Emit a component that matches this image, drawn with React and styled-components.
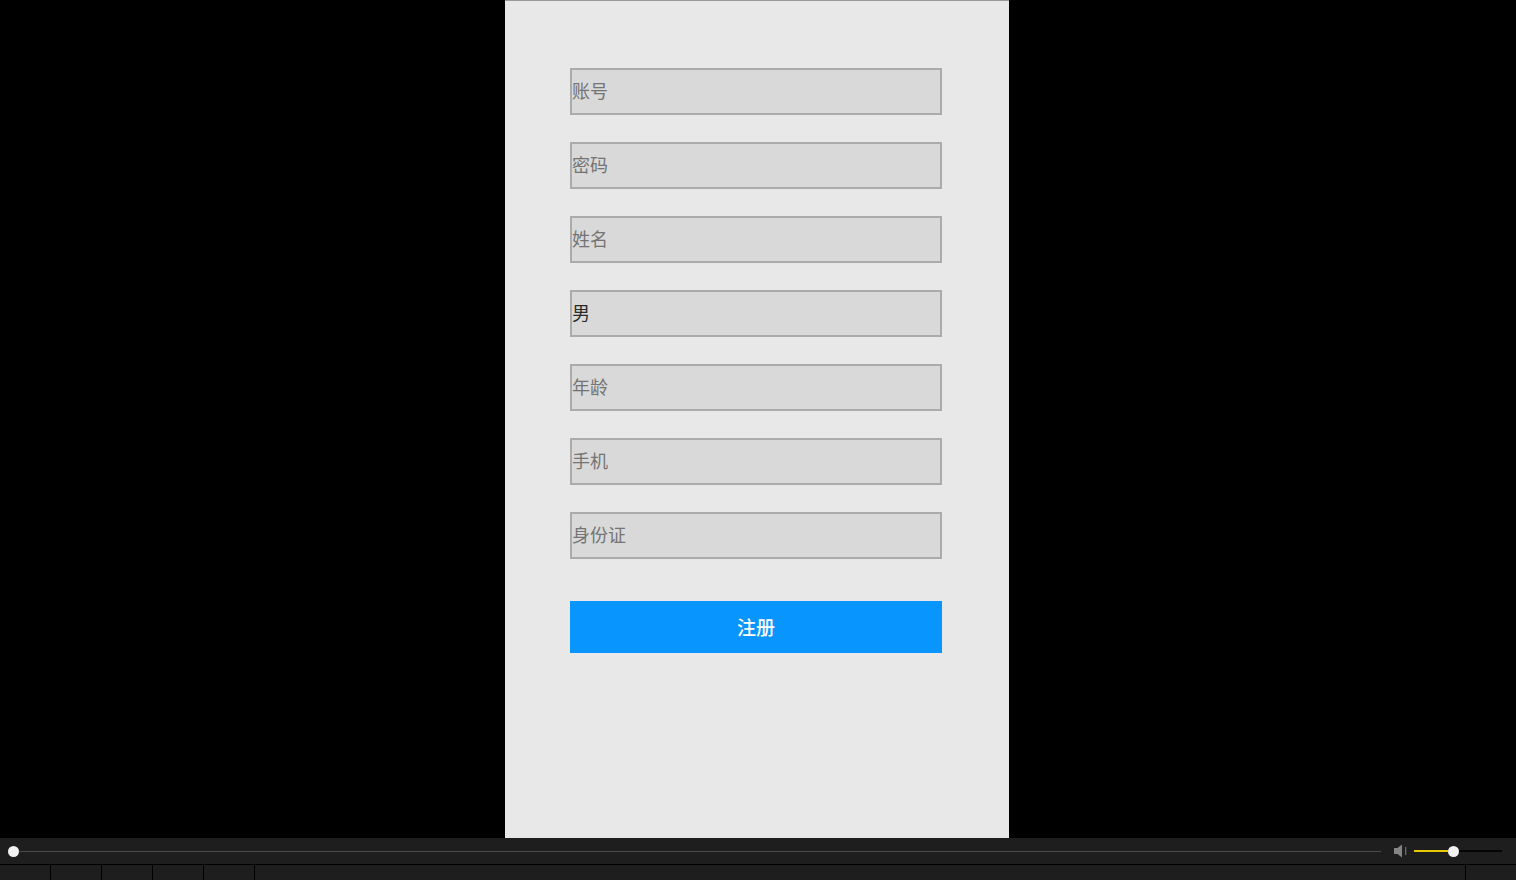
import React from "react";
import styled, { createGlobalStyle } from "styled-components";

const GlobalStyle = createGlobalStyle`
  html, body {
    margin: 0;
    padding: 0;
    background: #000;
    overflow: hidden;
  }
  #root {
    height: 880px;
  }
`;

const fields = [
  { placeholder: "账号" },
  { placeholder: "密码" },
  { placeholder: "姓名" },
  { value: "男" },
  { placeholder: "年龄" },
  { placeholder: "手机" },
  { placeholder: "身份证" },
];

export default function App() {
  return (
    <>
      <GlobalStyle />
      <Screen>
        <Stage>
          <Phone>
            <Form onSubmit={(e) => e.preventDefault()}>
              {fields.map((field, index) => (
                <Field
                  key={index}
                  placeholder={field.placeholder}
                  defaultValue={field.value}
                />
              ))}
              <SubmitButton type="submit">注册</SubmitButton>
            </Form>
          </Phone>
        </Stage>
        <Controls>
          <SeekRow>
            <Knob />
            <SeekTrack />
            <VolumeIcon width="16" height="14" viewBox="0 0 16 14">
              <path d="M1 4h3.5L9 0.5v13L4.5 10H1z" fill="#858585" />
              <rect x="12" y="3" width="1.3" height="8" fill="#6a6a6a" />
            </VolumeIcon>
            <Volume>
              <VolumeFill />
              <Knob />
              <VolumeRest />
            </Volume>
          </SeekRow>
          <CellRow>
            {[0, 1, 2, 3, 4].map((i) => (
              <Cell key={i} />
            ))}
            <Cell grow />
            <Cell />
          </CellRow>
        </Controls>
      </Screen>
    </>
  );
}

const Screen = styled.div`
  height: 880px;
  display: flex;
  flex-direction: column;
`;

const Stage = styled.div`
  flex: 1;
  display: flex;
  justify-content: center;
  padding-right: 2px;
  background: #000;
`;

const Phone = styled.div`
  width: 504px;
  height: 838px;
  box-sizing: border-box;
  background: #e8e8e8;
  border-top: 1px solid #9a9a9a;
`;

const Form = styled.form`
  display: flex;
  flex-direction: column;
  gap: 27px;
  padding: 67px 0 0 65px;
`;

const Field = styled.input`
  width: 372px;
  height: 47px;
  box-sizing: border-box;
  margin: 0;
  padding: 0 0 3px;
  border: 2px solid #ababab;
  background: #d9d9d9;
  font-family: "Noto Sans CJK SC", "Noto Sans", sans-serif;
  font-size: 18px;
  color: #2a2a2a;
  outline: none;
  &::placeholder {
    color: #747474;
  }
`;

const SubmitButton = styled.button`
  width: 372px;
  height: 52px;
  margin-top: 15px;
  padding: 0 0 2px;
  border: none;
  background: #0895fd;
  color: #fff;
  font-family: "Noto Sans CJK SC", "Noto Sans", sans-serif;
  font-size: 19px;
  font-weight: 500;
  cursor: pointer;
`;

const Controls = styled.div`
  height: 42px;
  display: flex;
  flex-direction: column;
  background: #000;
`;

const SeekRow = styled.div`
  height: 26px;
  display: flex;
  align-items: center;
  padding: 0 14px 0 8px;
  background: #1e1e1e;
`;

const Knob = styled.span`
  width: 11px;
  height: 11px;
  flex: none;
  border-radius: 50%;
  background: #f2f2f2;
`;

const SeekTrack = styled.div`
  flex: 1;
  height: 1px;
  margin: 0 12px 0 0;
  background: #4a4a4a;
`;

const VolumeIcon = styled.svg`
  flex: none;
  margin-right: 5px;
`;

const Volume = styled.div`
  width: 88px;
  display: flex;
  align-items: center;
`;

const VolumeFill = styled.div`
  width: 34px;
  height: 2px;
  background: #e6c700;
`;

const VolumeRest = styled.div`
  flex: 1;
  height: 2px;
  background: #050505;
`;

const CellRow = styled.div`
  flex: 1;
  display: flex;
  gap: 1px;
  padding-top: 1px;
  background: #000;
`;

const Cell = styled.div`
  width: ${(p) => (p.grow ? "auto" : "50px")};
  flex: ${(p) => (p.grow ? 1 : "none")};
  background: #1e1e1e;
`;
